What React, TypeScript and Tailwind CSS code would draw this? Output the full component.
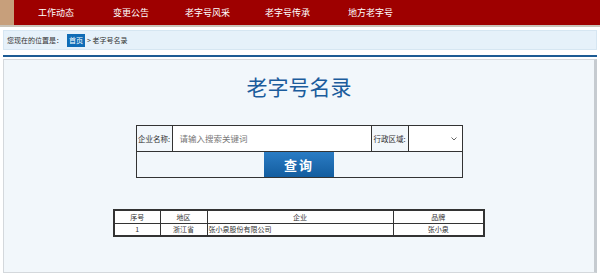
import React from 'react';

const font = { fontFamily: '"Noto Sans CJK SC", "Liberation Sans", sans-serif' };

const App = () => {
  return (
    <div className="w-[600px] h-[279px] bg-white overflow-hidden" style={font}>
      {/* top nav */}
      <div className="flex h-[27px] bg-[#9e0000] border-b-2 border-[#c9c3b8]">
        <div className="w-[14px] bg-[#c79f7b]" />
        <div className="flex items-center text-white text-[9px] pl-[24px] whitespace-nowrap">
          <span className="w-[75px]">工作动态</span>
          <span className="w-[72px]">变更公告</span>
          <span className="w-[80px]">老字号风采</span>
          <span className="w-[83px]">老字号传承</span>
          <span>地方老字号</span>
        </div>
      </div>

      {/* breadcrumb */}
      <div className="mx-[3px] mt-[3px] h-[20px] bg-[#e6f1fa] border border-[#d6e6f2] flex items-center pl-[3px] text-[7px] text-[#333] whitespace-nowrap">
        <span>您现在的位置是：</span>
        <span className="ml-[4px] bg-[#0f6cb6] text-white px-[2px] leading-[13px]">首页</span>
        <span className="ml-[2px]">&gt; 老字号名录</span>
      </div>

      {/* content */}
      <div className="mx-[3px] mt-[5px] border-t-2 border-[#1c5b94]">
        <div className="mt-[2px] h-[214px] bg-[#f2f7fb] border border-[#d4d8dc] border-r-[3px] border-r-[#c6cbd0] flex flex-col items-center">
          <h1 className="mt-[12px] text-[21px] leading-[28px] text-[#1b5c9c]">老字号名录</h1>

          <div className="mt-[25px] w-[327px] border border-[#333] text-[7.5px] text-[#333] whitespace-nowrap">
            <div className="flex h-[26px] border-b border-[#333]">
              <div className="w-[36px] flex items-center justify-center border-r border-[#333]">企业名称:</div>
              <div className="w-[199px] bg-white flex items-center pl-[7px] text-[8.5px] text-[#777] border-r border-[#333]">请输入搜索关键词</div>
              <div className="w-[37px] flex items-center justify-center border-r border-[#333]">行政区域:</div>
              <div className="flex-1 bg-white flex items-center justify-end pr-[5px]">
                <svg width="6" height="4" viewBox="0 0 6 4" fill="none" stroke="#666" strokeWidth="1">
                  <path d="M0.5 0.5 L3 3 L5.5 0.5" />
                </svg>
              </div>
            </div>
            <div className="flex h-[25px] justify-center">
              <div className="w-[70px] bg-gradient-to-b from-[#2a7cc4] to-[#135d9f] text-white font-bold text-[13px] flex items-center justify-center tracking-[2px]">查询</div>
            </div>
          </div>

          <table className="mt-[31px] w-[372px] border-collapse border-2 border-[#333] text-[7px] text-[#333] bg-white whitespace-nowrap">
            <thead>
              <tr className="h-[13px]">
                <th className="w-[46px] border border-[#333] font-normal">序号</th>
                <th className="w-[47px] border border-[#333] font-normal">地区</th>
                <th className="w-[186px] border border-[#333] font-normal">企业</th>
                <th className="border border-[#333] font-normal">品牌</th>
              </tr>
            </thead>
            <tbody>
              <tr className="h-[13px]">
                <td className="border border-[#333] text-center">1</td>
                <td className="border border-[#333] text-center">浙江省</td>
                <td className="border border-[#333] pl-[1px]">张小泉股份有限公司</td>
                <td className="border border-[#333] text-center">张小泉</td>
              </tr>
            </tbody>
          </table>
        </div>
      </div>
    </div>
  );
};

export default App;
